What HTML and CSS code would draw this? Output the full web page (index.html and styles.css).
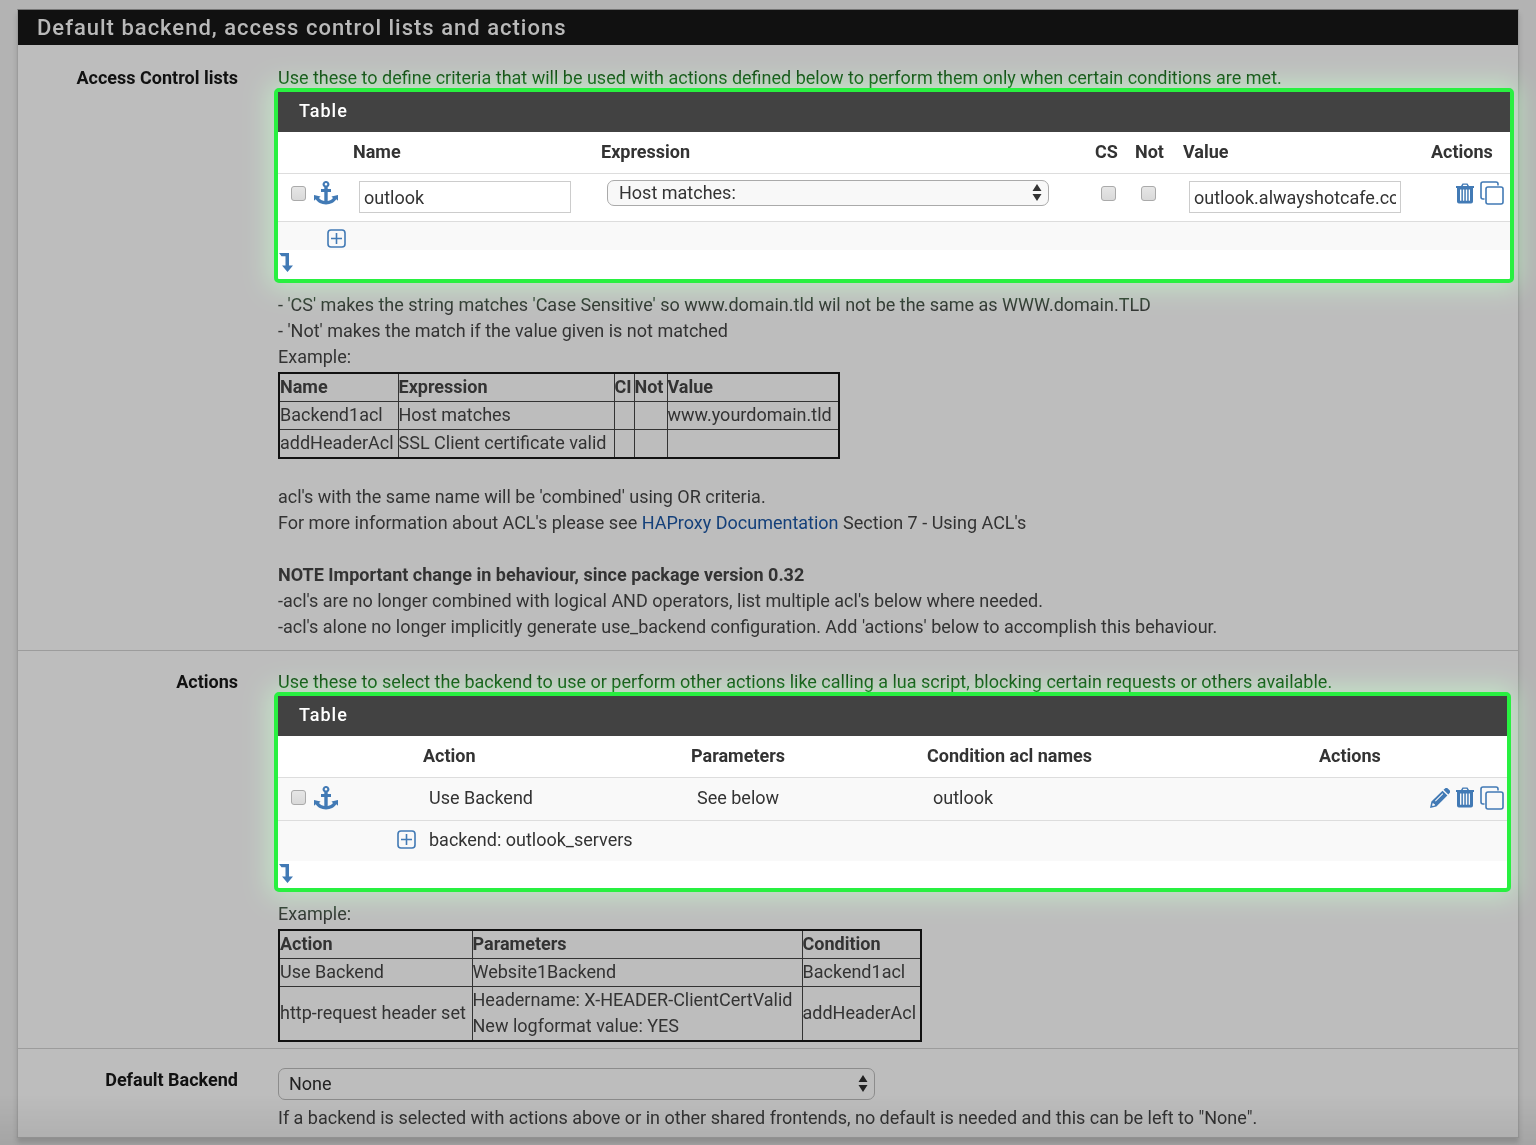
FILE: index.html
```html
<!DOCTYPE html>
<html lang="en">
<head>
<meta charset="utf-8">
<title>Frontend settings</title>
<link rel="stylesheet" href="styles.css">
</head>
<body>
<svg class="sprite" aria-hidden="true">
  <symbol id="i-anchor" viewBox="0 0 24 24">
    <path fill="currentColor" fill-rule="evenodd" d="M12 0a3.300 3.300 0 0 1 1.700 6.200V8H17v3h-3.300v9c2.300-.3 4.300-1.400 5.300-2.900l-1.500-1.500L24 14v5.700l-1.700-1.500C20.500 21.300 16.600 23.400 12 23.400S3.500 21.300 1.700 18.200L0 19.700V14l6.500 1.600L5 17.100c1 1.500 3 2.600 5.300 2.900v-9H7V8h3.300V6.200A3.300 3.300 0 0 1 12 0zm0 2a1.300 1.300 0 1 0 0 2.600A1.300 1.300 0 0 0 12 2z"/>
  </symbol>
  <symbol id="i-plus" viewBox="0 0 20 20">
    <g fill="none" stroke="currentColor"><rect x="1" y="1" width="17" height="17" rx="3" stroke-width="1.600"/><path d="M9.500 4v11M4 9.500h11" stroke-width="1.600"/></g>
  </symbol>
  <symbol id="i-down" viewBox="0 0 14 20">
    <path fill="currentColor" d="M0 0h10v12.500h4L8.500 19 3 12.500h3.500V3.200H2.500z"/>
  </symbol>
  <symbol id="i-trash" viewBox="0 0 18 21">
    <path fill="currentColor" fill-rule="evenodd" d="M5 3l1.500-2.500h5L13 3h5v2h-1v13.500a2 2 0 0 1-2 2H3a2 2 0 0 1-2-2V5H0V3zM6.700 3h4.600l-.7-1.200H7.400zM4 6.500v11.200h1.400V6.500zm2.900 0v11.200h1.400V6.500zm2.900 0v11.200h1.400V6.500zm2.900 0v11.200H14V6.500z"/>
  </symbol>
  <symbol id="i-copy" viewBox="0 0 24 24">
    <g fill="none" stroke="currentColor" stroke-width="1.600"><rect x="6" y="6" width="17" height="17" rx="2"/><path d="M18 4.500V3a2 2 0 0 0-2-2H3a2 2 0 0 0-2 2v13a2 2 0 0 0 2 2h1.500"/></g>
  </symbol>
  <symbol id="i-pencil" viewBox="0 0 20 20">
    <path fill="currentColor" fill-rule="evenodd" d="M13.500 1.800L15 .5a2 2 0 0 1 2.800 0l1.800 1.800a2 2 0 0 1 0 2.800l-1.300 1.400zM12.500 2.700l4.900 4.900L6.400 18.500 0 20l1.400-6.400zM12.500 5.200L5 12.700l.7.700 7.500-7.500zM2.600 15.300l-.5 2.100.6.600 2.100-.5v-1.400H3.700v-.8z"/>
  </symbol>
  <symbol id="i-updown" viewBox="0 0 9 17">
    <path fill="currentColor" d="M4.500 0L9 7H0zM0 10h9l-4.500 7z"/>
  </symbol>
</svg>

<main class="panel">
  <h1 class="panel-title">Default backend, access control lists and actions</h1>

  <section class="row">
    <h2 class="label">Access Control lists</h2>
    <div class="content">
      <p class="help">Use these to define criteria that will be used with actions defined below to perform them only when certain conditions are met.</p>
      <div class="box">
        <h3 class="box-title">Table</h3>
        <table class="grid">
          <colgroup><col class="c-pick"><col class="c-field"><col><col class="c-cs"><col class="c-not"><col class="c-field"><col class="c-act"></colgroup>
          <thead><tr><th></th><th>Name</th><th>Expression</th><th>CS</th><th>Not</th><th>Value</th><th>Actions</th></tr></thead>
          <tbody>
            <tr class="edit">
              <td><div class="tools"><input type="checkbox" aria-label="Select row"><button class="icon" type="button" aria-label="Move here"><svg class="s24"><use href="#i-anchor"/></svg></button></div></td>
              <td><input class="text" type="text" value="outlook" aria-label="Name"></td>
              <td><span class="select"><select aria-label="Expression"><option>Host matches:</option></select><svg><use href="#i-updown"/></svg></span></td>
              <td><input type="checkbox" aria-label="CS"></td>
              <td><input type="checkbox" aria-label="Not"></td>
              <td><input class="text" type="text" value="outlook.alwayshotcafe.com" aria-label="Value"></td>
              <td><div class="tools end"><button class="icon" type="button" aria-label="Delete"><svg class="trash"><use href="#i-trash"/></svg></button><button class="icon" type="button" aria-label="Duplicate"><svg class="s24"><use href="#i-copy"/></svg></button></div></td>
            </tr>
            <tr class="add slim">
              <td><div class="tools end"><button class="icon" type="button" aria-label="Add"><svg class="s20"><use href="#i-plus"/></svg></button></div></td>
              <td colspan="6"></td>
            </tr>
          </tbody>
        </table>
        <div class="foot"><button class="icon" type="button" aria-label="Add to end"><svg class="down"><use href="#i-down"/></svg></button></div>
      </div>
      <div class="notes">
        <p>- 'CS' makes the string matches 'Case Sensitive' so www.domain.tld wil not be the same as WWW.domain.TLD</p>
        <p>- 'Not' makes the match if the value given is not matched</p>
        <p>Example:</p>
        <table class="example">
          <colgroup><col class="e-name"><col class="e-expr"><col class="e-ci"><col class="e-not"><col class="e-value"></colgroup>
          <tr><th>Name</th><th>Expression</th><th>CI</th><th>Not</th><th>Value</th></tr>
          <tr><td>Backend1acl</td><td>Host matches</td><td></td><td></td><td>www.yourdomain.tld</td></tr>
          <tr><td>addHeaderAcl</td><td>SSL Client certificate valid</td><td></td><td></td><td></td></tr>
        </table>
        <p class="gap">acl's with the same name will be 'combined' using OR criteria.</p>
        <p>For more information about ACL's please see <a href="#">HAProxy Documentation</a> Section 7 - Using ACL's</p>
        <p class="gap"><b>NOTE Important change in behaviour, since package version 0.32</b></p>
        <p>-acl's are no longer combined with logical AND operators, list multiple acl's below where needed.</p>
        <p>-acl's alone no longer implicitly generate use_backend configuration. Add 'actions' below to accomplish this behaviour.</p>
      </div>
    </div>
  </section>

  <section class="row">
    <h2 class="label">Actions</h2>
    <div class="content">
      <p class="help">Use these to select the backend to use or perform other actions like calling a lua script, blocking certain requests or others available.</p>
      <div class="box inset">
        <h3 class="box-title">Table</h3>
        <table class="grid">
          <colgroup><col class="a-pick"><col class="a-action"><col class="a-param"><col><col class="a-act"></colgroup>
          <thead><tr><th></th><th>Action</th><th>Parameters</th><th>Condition acl names</th><th>Actions</th></tr></thead>
          <tbody>
            <tr class="add">
              <td><div class="tools"><input type="checkbox" aria-label="Select row"><button class="icon" type="button" aria-label="Move here"><svg class="s24"><use href="#i-anchor"/></svg></button></div></td>
              <td>Use Backend</td><td>See below</td><td>outlook</td>
              <td><div class="tools end"><button class="icon" type="button" aria-label="Edit"><svg class="s20"><use href="#i-pencil"/></svg></button><button class="icon" type="button" aria-label="Delete"><svg class="trash"><use href="#i-trash"/></svg></button><button class="icon" type="button" aria-label="Duplicate"><svg class="s24"><use href="#i-copy"/></svg></button></div></td>
            </tr>
            <tr class="add detail">
              <td><div class="tools end"><button class="icon" type="button" aria-label="Add"><svg class="s20"><use href="#i-plus"/></svg></button></div></td>
              <td colspan="4">backend: outlook_servers</td>
            </tr>
          </tbody>
        </table>
        <div class="foot"><button class="icon" type="button" aria-label="Add to end"><svg class="down"><use href="#i-down"/></svg></button></div>
      </div>
      <div class="notes">
        <p>Example:</p>
        <table class="example">
          <colgroup><col class="x-action"><col class="x-param"><col class="x-cond"></colgroup>
          <tr><th>Action</th><th>Parameters</th><th>Condition</th></tr>
          <tr><td>Use Backend</td><td>Website1Backend</td><td>Backend1acl</td></tr>
          <tr><td>http-request header set</td><td>Headername: X-HEADER-ClientCertValid<br>New logformat value: YES</td><td>addHeaderAcl</td></tr>
        </table>
      </div>
    </div>
  </section>

  <section class="row">
    <label class="label" for="default-backend">Default Backend</label>
    <div class="content">
      <span class="select large"><select id="default-backend"><option>None</option></select><svg><use href="#i-updown"/></svg></span>
      <p class="hint">If a backend is selected with actions above or in other shared frontends, no default is needed and this can be left to "None".</p>
    </div>
  </section>
</main>
</body>
</html>
```
FILE: styles.css
```css
* { box-sizing: border-box; }

body {
  margin: 0;
  padding: 9px 17px 7px;
  background: #b3b3b3;
  color: #333;
  font: 18px/26px Roboto, "Liberation Sans", sans-serif;
}

body::after {
  content: "";
  position: fixed;
  inset: auto 0 0;
  height: 50px;
  background: linear-gradient(transparent, rgba(0, 0, 0, .08));
  pointer-events: none;
}

p, h1, h2, h3 { margin: 0; }

.sprite { display: none; }

.panel {
  background: #bdbdbd;
  border: 1px solid #9c9c9c;
  border-top-color: #777;
  box-shadow: 0 5px 5px rgba(0, 0, 0, .15);
}

.panel-title {
  padding: 1px 19px 0;
  background: #111;
  color: #b9b9b9;
  font-size: 22px;
  font-weight: 500;
  line-height: 34px;
  letter-spacing: 1px;
}

.row {
  display: grid;
  grid-template-columns: 220px minmax(0, 1fr);
  column-gap: 40px;
  padding: 21px 4px 10px 0;
}

.row + .row {
  border-top: 1px solid #9c9c9c;
  padding: 19px 4px 6px 0;
}

.label {
  color: #111;
  font-size: 18px;
  font-weight: 700;
  line-height: 24px;
  text-align: right;
}

.help {
  color: #10380f;
  line-height: 24px;
}

.box {
  position: relative;
  margin: -2px 0 0 -4px;
  border: 4px solid #28f040;
  border-radius: 5px;
  background: #fff;
}

.inset { margin-right: 3px; }

.box::before {
  content: "";
  position: absolute;
  inset: -4px;
  border-radius: 5px;
  box-shadow: 0 0 26px 5px rgba(40, 240, 65, .65);
  mix-blend-mode: screen;
  pointer-events: none;
}

.box-title {
  padding: 0 21px 2px;
  background: #424242;
  color: #fff;
  font-size: 18px;
  font-weight: 500;
  line-height: 38px;
  letter-spacing: 1px;
}

.grid {
  width: 100%;
  table-layout: fixed;
  border-collapse: collapse;
}

.grid th {
  height: 41px;
  padding: 0 6px;
  text-align: left;
}

.grid td {
  height: 43px;
  padding: 0 12px 2px;
  border-top: 1px solid #ddd;
}

.grid td:first-child { padding-left: 13px; }
.grid td:last-child { padding-right: 6px; }
.inset td:last-child { padding-right: 3px; }
.grid .edit td { height: 48px; padding-bottom: 8px; }
.grid .edit td:nth-child(2), .grid .edit td:nth-child(6) { padding-bottom: 0; }
.grid .slim td { height: 29px; padding-top: 8px; }
.grid .detail td { height: 41px; }
.grid .add { background: #f9f9f9; }
.grid td:first-child .end { margin-right: -12px; }

.c-pick { width: 69px; }
.c-field { width: 248px; }
.c-cs { width: 40px; }
.c-not { width: 48px; }
.c-act { width: 85px; }
.a-pick { width: 139px; }
.a-action { width: 268px; }
.a-param { width: 236px; }
.a-act { width: 194px; }

.tools {
  display: flex;
  align-items: center;
  gap: 8px;
  line-height: 0;
}

.end { justify-content: flex-end; gap: 6px; }
.slim .tools { height: 18px; }

.icon {
  display: block;
  flex: none;
  padding: 0;
  border: 0;
  background: none;
  color: #427ab5;
}

.icon svg { display: block; }
.s24 { width: 24px; height: 24px; }
.s20 { width: 20px; height: 20px; }
.trash { width: 18px; height: 21px; }
.down { width: 14px; height: 20px; }

.foot {
  height: 29px;
  padding: 3px 1px;
}

.inset .foot { height: 27px; }

input[type="checkbox"] {
  appearance: none;
  display: block;
  flex: none;
  width: 15px;
  height: 15px;
  margin: 0;
  border: 1px solid #aaa;
  border-radius: 3px;
  background: linear-gradient(#e6e6e6, #d9d9d9);
}

.text {
  display: block;
  width: 212px;
  height: 32px;
  padding: 0 4px;
  border: 1px solid #ccc;
  background: #fff;
  color: #333;
  font: inherit;
}

.select {
  display: block;
  position: relative;
  max-width: 442px;
  color: #333;
}

.select select {
  appearance: none;
  display: block;
  width: 100%;
  height: 26px;
  padding: 0 11px;
  border: 1px solid #aaa;
  border-radius: 7px;
  background: #f8f8f8;
  color: inherit;
  font: inherit;
  line-height: 24px;
}

.select svg {
  position: absolute;
  top: 4px;
  right: 7px;
  width: 10px;
  height: 17px;
  pointer-events: none;
}

.large { max-width: 597px; color: #222; }
.large select { height: 32px; padding: 0 10px; border-color: #8c8c8c; background: #bdbdbd; }
.large svg { top: 7px; }

.notes { padding-top: 9px; }
.gap { margin-top: 26px; }
.hint { padding-top: 5px; }

a { color: #14407a; text-decoration: none; }

.example {
  margin-top: 2px;
  border: 2px solid #111;
  border-collapse: collapse;
}

.example th, .example td {
  height: 28px;
  padding: 0 0 1px;
  border: 1px solid #333;
  line-height: 26px;
  text-align: left;
}

.example + .gap { margin-top: 25px; }

.e-name { width: 119px; }
.e-expr { width: 216px; }
.e-ci { width: 20px; }
.e-not { width: 33px; }
.e-value { width: 172px; }
.x-action { width: 193px; }
.x-param { width: 330px; }
.x-cond { width: 119px; }
```
